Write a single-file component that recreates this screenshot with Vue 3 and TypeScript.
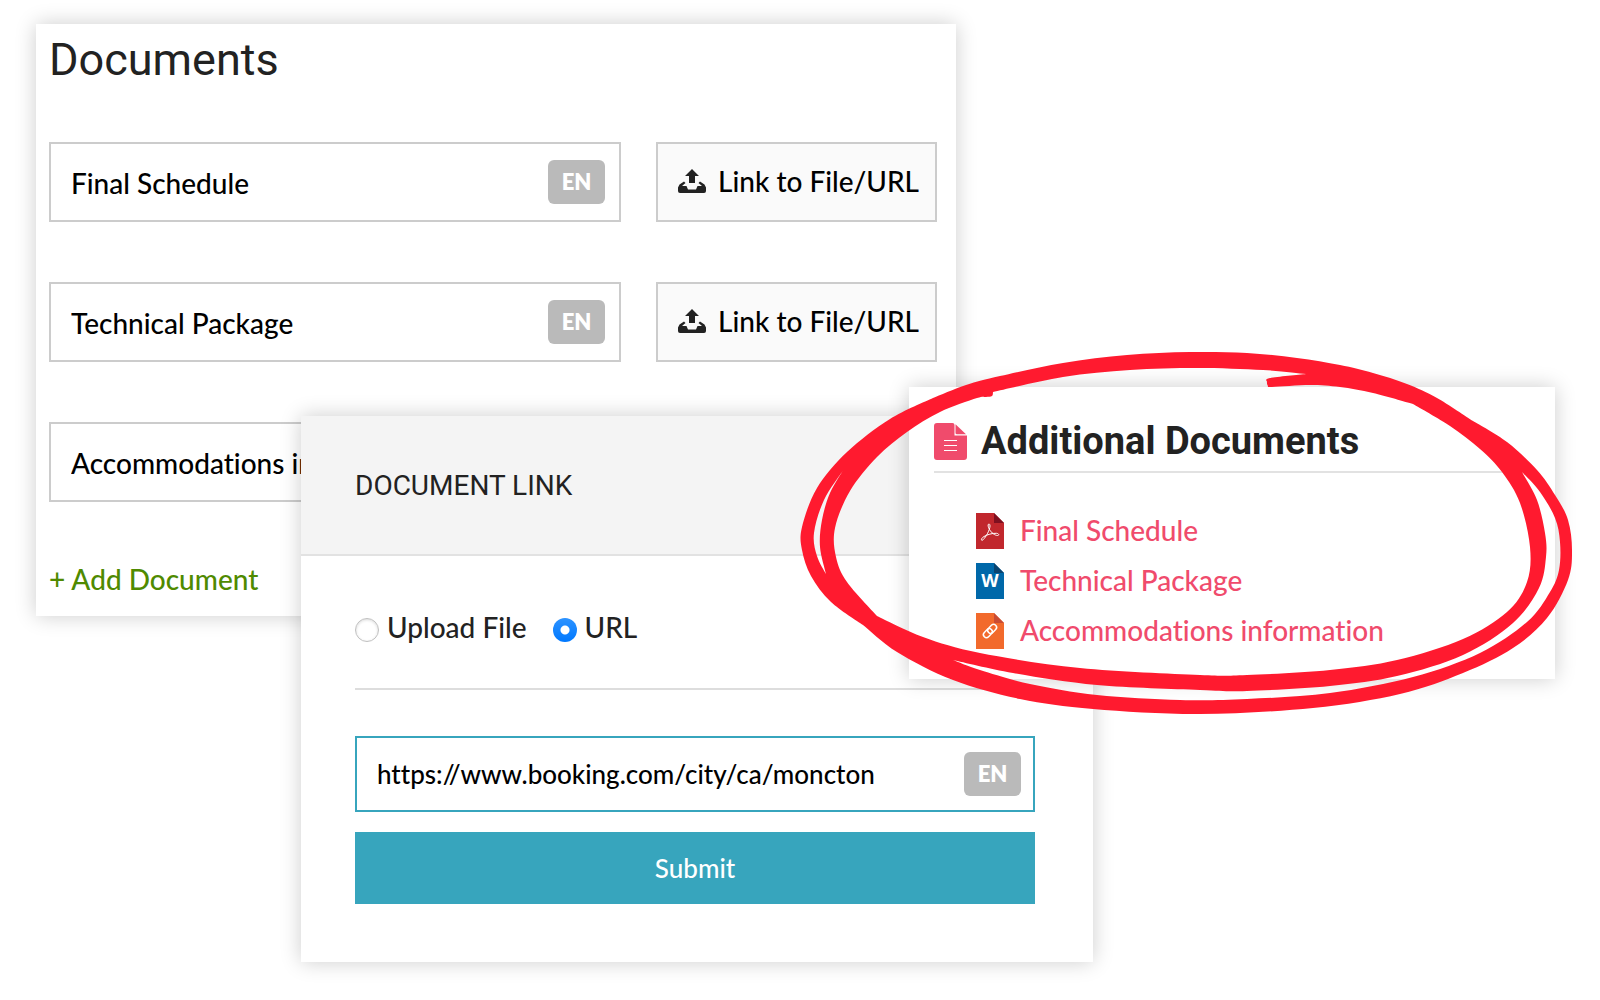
<script setup lang="ts">
import { ref } from 'vue'

type Point = [number, number]
type FileKind = 'pdf' | 'word' | 'link'

interface DocumentRow {
  title: string
  kind: FileKind
}

const documents = ref<DocumentRow[]>([
  { title: 'Final Schedule', kind: 'pdf' },
  { title: 'Technical Package', kind: 'word' },
  { title: 'Accommodations information', kind: 'link' },
])

const source = ref<'file' | 'url'>('url')
const url = ref('https://www.booking.com/city/ca/moncton')

const fileColors: Record<FileKind, { page: string; fold: string }> = {
  pdf: { page: '#c1272d', fold: '#7f1020' },
  word: { page: '#0068a9', fold: '#0a4470' },
  link: { page: '#f26a2c', fold: '#c94c34' },
}

function addDocument() {
  documents.value.push({ title: '', kind: 'link' })
}

// Smooth curve through the points of one run (Catmull-Rom as cubic beziers).
function run(points: Point[]): string {
  return points
    .slice(1)
    .map((p, i) => {
      const a = points[Math.max(i - 1, 0)]
      const b = points[i]
      const d = points[Math.min(i + 2, points.length - 1)]
      const c1 = [b[0] + (p[0] - a[0]) / 6, b[1] + (p[1] - a[1]) / 6]
      const c2 = [p[0] - (d[0] - b[0]) / 6, p[1] - (d[1] - b[1]) / 6]
      return `C${c1.map((n) => n.toFixed(1))} ${c2.map((n) => n.toFixed(1))} ${p}`
    })
    .join('')
}

// A closed shape made of smooth runs that meet in sharp corners.
function shape(runs: Point[][]): string {
  return runs.map((r, i) => (i === 0 ? `M${r[0]}` : `L${r[0]}`) + run(r)).join('') + 'Z'
}

const markerPath = [
  // outside edge
  shape([
    [[933, 398], [890, 419], [847, 452], [817, 488], [802, 527], [802, 550], [811, 576], [831, 602], [863, 625]],
    [[863, 625], [897, 652], [953, 680], [1020, 699], [1093, 709], [1200, 714], [1313, 708], [1400, 694], [1463, 673], [1513, 648], [1547, 618], [1568, 580], [1572, 550], [1568, 520], [1555, 495], [1537, 470], [1507, 442], [1473, 421]],
    [[1473, 421], [1437, 398], [1407, 384], [1373, 373], [1340, 365], [1297, 358], [1247, 353], [1190, 352], [1127, 355], [1063, 363], [1000, 376], [966, 385], [933, 398]],
  ]),
  // inside edge with the two loose stroke ends
  shape([
    [[993, 392], [992, 396], [986, 397], [977, 398], [940, 412], [907, 432], [877, 457], [850, 491], [835, 528], [836, 557], [847, 582], [877, 616]],
    [[877, 616], [923, 637], [980, 653], [1080, 668], [1200, 675], [1247, 675], [1330, 670], [1397, 660], [1463, 639], [1507, 612], [1527, 582], [1530, 547], [1520, 503], [1502, 472], [1480, 449], [1450, 426], [1413, 404]],
    [[1413, 404], [1373, 393], [1340, 387], [1310, 385], [1272, 387], [1268, 386], [1267, 382], [1270, 378], [1306, 374]],
    [[1306, 374], [1263, 370], [1197, 368], [1130, 370], [1063, 377], [993, 392]],
  ]),
  // gaps between the two turns
  shape([
    [[844, 469], [824, 500], [814, 533], [817, 556], [826, 574]],
    [[826, 574], [820, 547], [822, 520], [830, 493], [844, 469]],
  ]),
  shape([
    [[953, 660], [1013, 673], [1097, 685], [1200, 690], [1247, 691], [1330, 686], [1397, 676], [1463, 655], [1513, 623], [1539, 588], [1546, 557], [1545, 533], [1537, 500], [1522, 472]],
    [[1522, 472], [1540, 492], [1555, 518], [1560, 542], [1559, 570], [1550, 592], [1527, 622], [1480, 653], [1413, 677], [1330, 693], [1247, 699], [1180, 700], [1097, 695], [1030, 684], [980, 670], [953, 660]],
  ]),
].join('')
</script>

<template>
  <main class="stage">
    <section class="panel documents">
      <h1>Documents</h1>
      <div v-for="(doc, i) in documents" :key="i" class="row">
        <div class="field">
          <input v-model="doc.title" type="text" :aria-label="`Document ${i + 1} title`" />
          <span class="lang">EN</span>
        </div>
        <button type="button" class="link-button">
          <svg class="upload" viewBox="0 0 28 24" aria-hidden="true">
            <path d="M14 0L21 7H17V14H11V7H7Z" />
            <path d="M6 12.500L7.500 14L4 17H8.500L10 20.500H18L19.500 17H24L20.500 14L22 12.500L26.500 15.500L28 18.500V22Q28 24 26 24H2Q0 24 0 22V18.500L1.500 15.500Z" />
          </svg>
          Link to File/URL
        </button>
      </div>
      <button type="button" class="add" @click="addDocument">+ Add Document</button>
    </section>

    <section class="panel dialog">
      <header><h2>DOCUMENT LINK</h2></header>
      <form @submit.prevent>
        <div class="choices">
          <label><input v-model="source" type="radio" name="source" value="file" />Upload File</label>
          <label><input v-model="source" type="radio" name="source" value="url" />URL</label>
        </div>
        <div class="field active">
          <input v-model="url" type="text" aria-label="Document URL" />
          <span class="lang">EN</span>
        </div>
        <button type="submit" class="submit">Submit</button>
      </form>
    </section>

    <section class="panel preview">
      <h2>
        <svg class="page" viewBox="0 0 33 37" aria-hidden="true">
          <path d="M3 0H18.500Q20.500 0 20.500 2V12.500H33V34Q33 37 30 37H3Q0 37 0 34V3Q0 0 3 0Z" />
          <path d="M21.500 1.200L32 11.300H23Q21.500 11.300 21.500 10Z" />
          <path class="lines" d="M10 17.500H23M10 22.500H23M10 27.500H23" />
        </svg>
        Additional Documents
      </h2>
      <ul>
        <li v-for="(doc, i) in documents" :key="i">
          <svg class="file" viewBox="0 0 28 36" aria-hidden="true">
            <path d="M0 0H18L28 10V36H0Z" :fill="fileColors[doc.kind].page" />
            <path d="M18 0L28 10H18Z" :fill="fileColors[doc.kind].fold" />
            <path
              v-if="doc.kind === 'pdf'"
              class="glyph thin"
              d="M13 11C11.500 11 12 14 13.500 16.500C15.500 20 19 22.500 21.500 22.500C23.500 22.500 23 20.500 20.500 20.300C16.500 20 11 21.700 8 23.500C4.500 25.500 5 28.500 7 26.800C10 24.200 14 16.500 14 13C14 11.500 13.500 11 13 11Z"
            />
            <text v-else-if="doc.kind === 'word'" class="letter" x="14" y="24">W</text>
            <g v-else class="glyph" transform="rotate(-45 14 18)">
              <rect x="6" y="15" width="10" height="6" rx="3" />
              <rect x="12" y="15" width="10" height="6" rx="3" />
            </g>
          </svg>
          <a href="#">{{ doc.title }}</a>
        </li>
      </ul>
      <svg class="marker" viewBox="799 347 776 372" preserveAspectRatio="none" aria-hidden="true">
        <path :d="markerPath" fill-rule="evenodd" />
      </svg>
    </section>
  </main>
</template>

<style>
body {
  margin: 0;
  background: #fff;
}
</style>

<style scoped>
* {
  box-sizing: border-box;
}

.stage {
  display: grid;
  grid-template-columns: 36fr 265fr 608fr 47fr 137fr 462fr 45fr;
  align-items: start;
  min-height: 100vh;
  overflow: hidden;
  font-family: Lato, 'Liberation Sans', sans-serif;
  font-size: 28px;
  font-weight: 500;
  font-variant-ligatures: none;
  line-height: 36px;
  color: #222;
}

.panel {
  position: relative;
  grid-row: 1;
  min-width: 0;
  background: #fff;
  box-shadow: 0 0 20px rgba(0, 0, 0, 0.2);
}

h1,
h2 {
  margin: 0;
  font-family: Roboto, 'Open Sans', sans-serif;
  font-weight: 400;
}

input,
button {
  font: inherit;
  font-variant-ligatures: none;
  color: #000;
}

/* document list */
.documents {
  grid-column: 2 / 5;
  display: flex;
  flex-direction: column;
  gap: 60px;
  margin-top: 24px;
  padding: 10px 19px 20px 13px;
}

h1 {
  height: 48px;
  font-size: 45px;
  line-height: 52px;
}

.row {
  display: flex;
  gap: 35px;
  height: 80px;
}

.field {
  position: relative;
  display: flex;
  flex: 1;
  min-width: 0;
}

.field input {
  width: 100%;
  min-width: 0;
  padding: 2px 88px 0 20px;
  border: 2px solid #ccc;
  border-radius: 0;
  background: #fff;
  outline: none;
}

.lang {
  position: absolute;
  top: 18px;
  right: 16px;
  width: 57px;
  border-radius: 6px;
  background: #bababa;
  color: #fff;
  font-size: 22px;
  font-weight: 800;
  line-height: 44px;
  text-align: center;
}

.link-button {
  display: flex;
  flex: 0 0 281px;
  align-items: center;
  gap: 12px;
  padding: 0 0 2px 20px;
  border: 2px solid #ccc;
  background: #fafafa;
  white-space: nowrap;
}

.upload {
  width: 28px;
  height: 24px;
  fill: #222;
}

.add {
  align-self: flex-start;
  padding: 0;
  border: 0;
  background: none;
  color: #4f8a00;
  line-height: 34px;
}

/* link dialog */
.dialog {
  grid-column: 3 / 6;
  margin-top: 416px;
}

.dialog header {
  padding: 52px 54px 50px;
  border-bottom: 2px solid #e2e2e2;
  background: #f4f4f4;
}

.dialog h2 {
  font-size: 28px;
  line-height: 36px;
}

.dialog form {
  display: flex;
  flex-direction: column;
  padding: 54px 58px 58px 54px;
}

.choices {
  display: flex;
  gap: 26px;
  margin-bottom: 46px;
  padding-bottom: 44px;
  border-bottom: 2px solid #ddd;
  line-height: 34px;
}

.choices label {
  display: flex;
  align-items: center;
  gap: 8px;
}

.choices input {
  appearance: none;
  width: 24px;
  height: 24px;
  margin: 6px 0 0;
  border: 1px solid #c0c0c0;
  border-radius: 50%;
  background: #fff;
  box-shadow: inset 0 1px 3px rgba(0, 0, 0, 0.15);
}

.choices input:checked {
  border: 0;
  background: radial-gradient(circle, #fff 4px, transparent 5px), linear-gradient(#2d93ff, #0078ff);
  box-shadow: none;
}

.active {
  flex: 0 0 76px;
  margin-bottom: 20px;
  font-size: 26px;
}

.active input {
  padding-top: 0;
  border-color: #37a5bd;
}

.active .lang {
  top: 16px;
  right: 14px;
}

.submit {
  height: 72px;
  border: 0;
  background: #37a5bd;
  color: #fff;
  font-size: 26px;
}

/* published list */
.preview {
  grid-column: 4 / 7;
  margin-top: 387px;
  padding: 32px 25px 30px;
}

.preview h2 {
  display: flex;
  align-items: center;
  gap: 14px;
  padding-bottom: 8px;
  border-bottom: 2px solid #e2e2e2;
  font-size: 38px;
  font-weight: 700;
  line-height: 44px;
  white-space: nowrap;
}

.page {
  width: 33px;
  height: 37px;
  fill: #f04b6c;
}

.lines {
  stroke: #fff;
  stroke-width: 1;
}

.preview ul {
  display: flex;
  flex-direction: column;
  gap: 14px;
  margin: 40px 0 0;
  padding: 0 0 0 42px;
  list-style: none;
}

.preview li {
  display: flex;
  align-items: flex-start;
  gap: 16px;
  height: 36px;
  line-height: 34px;
  white-space: nowrap;
}

.preview a {
  color: #f04b6c;
  text-decoration: none;
}

.file {
  width: 28px;
  height: 36px;
}

.glyph {
  fill: none;
  stroke: #fff;
  stroke-width: 1.5;
}

.thin {
  stroke-width: 1;
}

.letter {
  fill: #fff;
  font-family: 'Open Sans', sans-serif;
  font-size: 18px;
  font-weight: 700;
  text-anchor: middle;
}

.marker {
  position: absolute;
  top: -40px;
  left: -110px;
  width: calc(100% + 130px);
  height: calc(100% + 80px);
  fill: #ff1a2f;
  pointer-events: none;
}
</style>
